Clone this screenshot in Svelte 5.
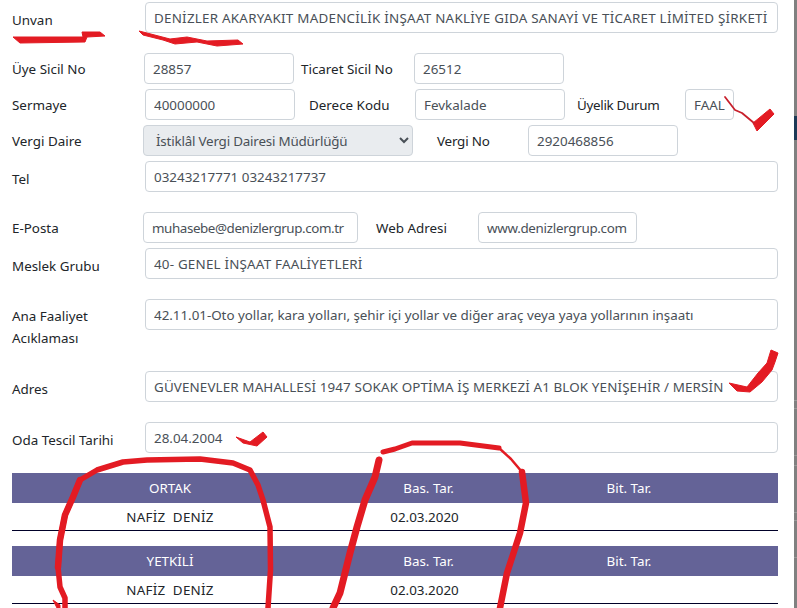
<script>
  const strokes = [
    { d: 'M65 608 L65 598 L60 587 L58 567 L60 540 L65 515 L73 497 L80 480 L97 470 L123 462 L147 460 L200 459 L233 463 L250 470 L258 485 L263 500 L270 527 L270.5 570 L268 608', w: 5.5 },
    { d: 'M58 567 L60 540 L65 515 L73 497 L80 480', w: 6.5 },
    { d: 'M379 460 L375 477 L365 500 L357 527 L350 553 L340 593 L333 608', w: 7 },
    { d: 'M383 452 L395 449 L412 443 L460 443 L499 448', w: 5 },
    { d: 'M499 448 L511 459 L522 472', w: 2.5 },
    { d: 'M522 472 L526 503 L520 533 L507 573 L500 608', w: 6.5 },
    { d: 'M725 97 L735 110 L742 113 L754 123', w: 1.8, c: '#c8202c' }
  ];
  const blobs = [
    '13,37 83,37 82,32 100,32 105,36 87,37 85,42 20,43',
    '139,31 147,33 170,39 187,37 207,41 238,40 243,44 217,46 197,42 175,44 163,40 143,35',
    '753,123 770,109 774,114 757,131',
    '729,383 747,387 758,373 767,363 771,350 778,353 775,362 772,370 762,382 750,392 737,391',
    '236,437 250,442 263,432 267,437 257,446 243,443',
    '53,600 60,605 60,608 57,608'
  ];
  const tables = [
    { head: 'ORTAK', name: 'NAFİZ  DENİZ', date: '02.03.2020' },
    { head: 'YETKİLİ', name: 'NAFİZ  DENİZ', date: '02.03.2020' }
  ];
</script>

<div class="page">
  <main class="form">
    <div class="row">
      <label class="low w133" for="unvan">Unvan</label>
      <input id="unvan" class="grow ls24" value="DENİZLER AKARYAKIT MADENCİLİK İNŞAAT NAKLİYE GIDA SANAYİ VE TİCARET LİMİTED ŞİRKETİ" />
    </div>

    <div class="row gap">
      <label class="w132" for="uye">Üye Sicil No</label>
      <input id="uye" class="w150" value="28857" />
      <label class="ticaret" for="ticaret">Ticaret Sicil No</label>
      <input id="ticaret" class="w150" value="26512" />
    </div>

    <div class="row">
      <label class="w133" for="sermaye">Sermaye</label>
      <input id="sermaye" class="w150" value="40000000" />
      <label class="derece" for="derece">Derece Kodu</label>
      <input id="derece" class="w150" value="Fevkalade" />
      <label class="durum" for="durum">Üyelik Durum</label>
      <input id="durum" class="w49" value="FAAL" />
    </div>

    <div class="row">
      <label class="w131" for="daire">Vergi Daire</label>
      <select id="daire" class="daire"><option>İstiklâl Vergi Dairesi Müdürlüğü</option></select>
      <label class="vno" for="vno">Vergi No</label>
      <input id="vno" class="w150" value="2920468856" />
    </div>

    <div class="row">
      <label class="low w133" for="tel">Tel</label>
      <input id="tel" class="grow" value="03243217771 03243217737" />
    </div>

    <div class="row gap">
      <label class="w131" for="eposta">E-Posta</label>
      <input id="eposta" class="eposta" value="muhasebe@denizlergrup.com.tr" />
      <label class="web" for="web">Web Adresi</label>
      <input id="web" class="webin" value="www.denizlergrup.com" />
    </div>

    <div class="row">
      <label class="low w133" for="meslek">Meslek Grubu</label>
      <input id="meslek" class="grow ls20" value="40- GENEL İNŞAAT FAALİYETLERİ" />
    </div>

    <div class="row gap tall">
      <label class="two w133" for="ana">Ana Faaliyet Acıklaması</label>
      <input id="ana" class="grow ana" value="42.11.01-Oto yollar, kara yolları, şehir içi yollar ve diğer araç veya yaya yollarının inşaatı" />
    </div>

    <div class="row after-tall">
      <label class="low w133" for="adres">Adres</label>
      <input id="adres" class="grow ls13" value="GÜVENEVLER MAHALLESİ 1947 SOKAK OPTİMA İŞ MERKEZİ A1 BLOK YENİŞEHİR / MERSİN" />
    </div>

    <div class="row gap">
      <label class="low w133" for="oda">Oda Tescil Tarihi</label>
      <input id="oda" class="grow" value="28.04.2004" />
    </div>

    {#each tables as t}
      <table>
        <colgroup><col class="c1" /><col class="c2" /><col class="c3" /><col /></colgroup>
        <thead><tr><th>{t.head}</th><th>Bas. Tar.</th><th>Bit. Tar.</th><th></th></tr></thead>
        <tbody><tr><td class="name">{t.name}</td><td class="date">{t.date}</td><td></td><td></td></tr></tbody>
      </table>
    {/each}
  </main>

  <aside class="edge"></aside>

  <svg class="ink" width="797" height="608" viewBox="0 0 797 608" aria-hidden="true">
    {#each blobs as p}<polygon points={p} fill="#e31b23" stroke="#e31b23" stroke-width="1" stroke-linejoin="round" />{/each}
    {#each strokes as s}<path d={s.d} fill="none" stroke={s.c ?? '#e31b23'} stroke-width={s.w} stroke-linejoin="round" stroke-linecap="round" />{/each}
  </svg>
</div>

<style>
  :global(body) { margin: 0; background: #fff; overflow: hidden; }
  .page {
    position: relative; display: flex; width: 797px; height: 608px; overflow: hidden;
    font-family: "Noto Sans", "DejaVu Sans", sans-serif; font-size: 13.4px; color: #212529;
  }
  .form { width: 794px; box-sizing: border-box; padding: 2px 16px 0 12px; flex: none; }
  .edge {
    flex: 1;
    background: linear-gradient(to bottom,
      #808080 0 116px, #1c3a57 116px 140px, #808080 140px 400px,
      #999 400px 401px, #808080 401px 408px, #999 408px 409px, #808080 409px 455px,
      #999 455px 456px, #808080 456px 465px, #999 465px 466px, #808080 466px 512px,
      #999 512px 513px, #808080 513px 520px, #999 520px 521px, #808080 521px 557px,
      #999 557px 558px, #808080 558px 608px);
  }

  .row { display: flex; height: 31px; margin-top: 5px; align-items: center; }
  .row:first-child { margin-top: 0; }
  .row.gap { margin-top: 20px; }
  .row.tall { height: 50px; align-items: flex-start; }
  .row.after-tall { margin-top: 22px; }

  label { flex: none; line-height: 22px; }
  .low { padding-top: 5px; }
  .two { padding-top: 7px; line-height: 21.5px; }
  .w131 { width: 131px; } .w132 { width: 132px; } .w133 { width: 133px; }
  .ticaret { margin-left: 7px; width: 113px; }
  .derece { margin-left: 14px; width: 106px; }
  .durum { margin-left: 12px; width: 108px; letter-spacing: -0.3px; }
  .vno { margin-left: 24px; width: 91px; letter-spacing: -0.2px; }
  .web { margin-left: 18px; width: 102px; }

  input, select {
    box-sizing: border-box; height: 31px; flex: none; margin: 0; font: inherit;
    color: #495057; background: #fff; border: 1px solid #ced4da; border-radius: 4px;
    padding: 0 8px; outline: none;
  }
  select { background: #e9ecef; letter-spacing: -0.2px; }
  .grow { flex: 1; min-width: 0; }
  .ls24 { letter-spacing: 0.24px; }
  .ls20 { letter-spacing: 0.2px; }
  .ls13 { letter-spacing: 0.13px; }
  .ana { letter-spacing: -0.03px; }
  .w150 { width: 150px; } .w49 { width: 49px; }
  .daire { width: 270px; }
  .eposta { width: 215px; letter-spacing: -0.42px; }
  .webin { width: 159px; letter-spacing: -0.3px; }

  table { width: 766px; border-collapse: collapse; table-layout: fixed; margin-top: 15px; text-align: center; }
  .row + table { margin-top: 20px; }
  .c1 { width: 316px; } .c2 { width: 201px; } .c3 { width: 200px; }
  th { height: 30px; padding: 0; background: #646397; color: #fff; font-weight: 400; }
  td { height: 27px; padding: 0; border-bottom: 1px solid #000028; }
  .name { white-space: pre; letter-spacing: 0.25px; }
  .date { padding-right: 8px; }

  .ink { position: absolute; left: 0; top: 0; pointer-events: none; }
</style>
